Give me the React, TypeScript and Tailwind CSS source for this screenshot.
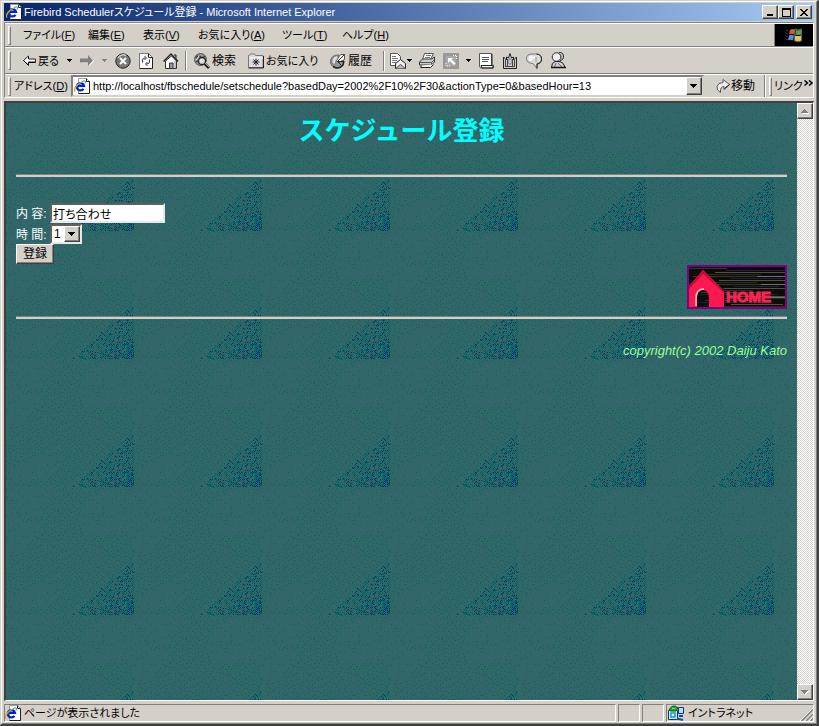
import React from "react";

const raised =
  "border border-t-white border-l-white border-r-[#404040] border-b-[#404040] bg-[#d4d0c8] shadow-[inset_-1px_-1px_0_#808080]";
const sunken = "border border-t-[#808080] border-l-[#808080] border-r-white border-b-white";

/* ---------- dithered wallpaper tile ---------- */

const TILE = 128;

function buildTile() {
  let seed = 20021;
  const rnd = () => {
    seed = (seed * 16807) % 2147483647;
    return seed / 2147483647;
  };
  const paths = { teal: "", blue: "", navy: "", wine: "" };
  const put = (key: keyof typeof paths, x: number, y: number) => {
    paths[key] += `M${x} ${y}h1v1h-1z`;
  };
  const inBlue = (x: number, y: number) =>
    (x < 46 && y < 42 - x * 0.4) ||
    (x < 36 && y > 36 && y < 78 - x) ||
    (x > 4 && x < 54 && y > 110 - x * 0.5 && y < 126 - x * 0.2) ||
    (x > 74 && y > 2 && y < 48 && x + y > 98);
  const shadeDepth = (x: number, y: number) => (x + y * 1.1 - 206) / 58;
  for (let y = 0; y < TILE; y += 4) {
    for (let x = 0; x < TILE; x += 4) {
      const px = x + Math.floor(rnd() * 3);
      const py = y + Math.floor(rnd() * 3);
      if (inBlue(px, py)) {
        put(rnd() < 0.65 ? "blue" : "teal", px, py);
      } else {
        put("teal", px, py);
        if (rnd() < (px + py > 130 ? 0.7 : 0.25)) {
          put("teal", x + ((px + 2) % 4), y + ((py + 2) % 4));
        }
      }
    }
  }
  for (let y = 66; y < TILE; y += 1) {
    for (let x = 58; x < TILE; x += 1) {
      const depth = shadeDepth(x, y);
      if (depth < 0) continue;
      const r = rnd();
      if ((x + y) % 2 === 0) {
        if (r < 0.1 + depth * 0.36) put("navy", x, y);
        else if (r < 0.32 + depth * 0.5) put("teal", x, y);
      } else if (r < 0.04 * depth) {
        put("wine", x, y);
      } else if (r < 0.12 + depth * 0.2) {
        put("teal", x, y);
      }
    }
  }
  return paths;
}

const tile = buildTile();

function Wallpaper() {
  return (
    <svg className="absolute inset-0 h-full w-full" shapeRendering="crispEdges" aria-hidden="true">
      <defs>
        <pattern id="tile" width={TILE} height={TILE} patternUnits="userSpaceOnUse">
          <rect width={TILE} height={TILE} fill="#336666" />
          <path d={tile.teal} fill="#006666" />
          <path d={tile.blue} fill="#336699" />
          <path d={tile.navy} fill="#003366" />
          <path d={tile.wine} fill="#663366" />
        </pattern>
      </defs>
      <rect width="100%" height="100%" fill="url(#tile)" />
    </svg>
  );
}

/* ---------- icons ---------- */

function Icon({ children, w = 16, h = 16 }: { children: React.ReactNode; w?: number; h?: number }) {
  return (
    <svg width={w} height={h} viewBox={`0 0 ${w} ${h}`} className="shrink-0" aria-hidden="true">
      {children}
    </svg>
  );
}

function PageIcon() {
  return (
    <Icon>
      <path d="M4.500.5h8l3 3v12h-11z" fill="#fff" stroke="#a0a0a0" />
      <path d="M12.500.5v3h3v12h-11" fill="none" stroke="#222" />
      <path d="M9.500 10.800a3.700 3.700 0 1 1 .5-3h-6.500" fill="none" stroke="#0020e0" strokeWidth="2.200" />
      <path d="M1 13.500c-2-2 2-8 8-10" fill="none" stroke="#c8b400" strokeWidth="1.300" />
      <path d="M8.500 3.500c3-1.500 3.500 0 2.500 2" fill="none" stroke="#0080c0" />
    </Icon>
  );
}

function Caret({ color = "#000" }: { color?: string }) {
  return (
    <svg width="5" height="3" viewBox="0 0 5 3" className="shrink-0" shapeRendering="crispEdges" aria-hidden="true">
      <path d="M0 0h5v1h-1v1h-1v1h-1v-1h-1v-1h-1z" fill={color} />
    </svg>
  );
}

function BigCaret({ color = "#000", up = false, shade = false }: { color?: string; up?: boolean; shade?: boolean }) {
  const d = up ? "M3 0h1v1h1v1h1v1h1v1h-7v-1h1v-1h1v-1h1z" : "M0 0h7v1h-1v1h-1v1h-1v1h-1v-1h-1v-1h-1v-1h-1z";
  return (
    <svg width="8" height="5" viewBox="0 0 8 5" shapeRendering="crispEdges" aria-hidden="true">
      {shade && <path d={d} fill="#fff" transform="translate(1 1)" />}
      <path d={d} fill={color} />
    </svg>
  );
}

const BackIcon = () => (
  <Icon w={13} h={13}>
    <path d="M5.500 2v3h7v3h-7v3l-5-4.500z" fill="#fff" stroke="#222" />
    <path d="M5.500 8.500h7M5.500 11.500l-5-5" stroke="#000" fill="none" />
  </Icon>
);
const ForwardIcon = () => (
  <Icon w={14} h={13}>
    <path d="M9 3v3h-8v3h8v3l5-5z" fill="#fff" />
    <path d="M8 1v3.500h-8v4h8v3.500l5-5.500z" fill="#808080" />
  </Icon>
);
const StopIcon = () => (
  <Icon>
    <circle cx="8" cy="8" r="7.200" fill="#777" stroke="#222" />
    <path d="M3 5a6 6 0 0 1 8-2.500" stroke="#ccc" fill="none" strokeWidth="1.500" />
    <path d="M5 5l6 6M11 5l-6 6" stroke="#fff" strokeWidth="2" />
  </Icon>
);
const RefreshIcon = () => (
  <Icon w={14}>
    <path d="M.5.5h9l4 4v11h-13z" fill="#fff" stroke="#777" />
    <path d="M9.500.5v4h4v11h-13" fill="none" stroke="#222" />
    <path d="M3.500 9.500v-2.500q0-2 3-2M5.500 3l2 2-2 2M10.500 6.500v2.500q0 2-3 2M8.500 9l-2 2 2 2" fill="none" stroke="#333" />
  </Icon>
);
const HouseIcon = () => (
  <Icon>
    <path d="M11 2h2v4" stroke="#222" fill="#aaa" />
    <path d="M2.500 8v7.500h11v-7.500l-5-5z" fill="#fff" stroke="#333" />
    <path d="M.5 8.500l7.500-7.500 7 7.500" fill="none" stroke="#222" strokeWidth="1.400" />
    <path d="M6.500 15v-5h3.500v5" fill="#999" stroke="#333" />
    <path d="M12 8v7" stroke="#888" />
  </Icon>
);
const SearchIcon = () => (
  <Icon>
    <circle cx="6.500" cy="6.500" r="6" fill="#999" stroke="#555" />
    <path d="M1.500 5q3-4 5-1t4-1M2 9q3-2 4 2" stroke="#444" fill="none" strokeWidth="1.500" />
    <path d="M2 7q3-2 3-5" stroke="#ddd" fill="none" />
    <circle cx="8" cy="8" r="3.500" fill="#ddd" stroke="#222" strokeWidth="1.300" />
    <path d="M6.500 8q0-1.500 1.500-1.500" stroke="#fff" fill="none" />
    <path d="M10.500 10.500l4.500 4.500" stroke="#222" strokeWidth="2.800" />
    <path d="M11 10l4 4" stroke="#aaa" />
  </Icon>
);
const FavIcon = () => (
  <Icon>
    <path d="M.5 14.500v-12h1l1-1.500h4l1 1.500h7.500v12z" fill="#ddd" stroke="#777" />
    <path d="M15.500 3v12h-15" fill="none" stroke="#222" />
    <path d="M1 5h14" stroke="#fff" />
    <path d="M8 5.500v7M4.500 9h7M5.500 6.500l5 5M10.500 6.500l-5 5" stroke="#222" />
  </Icon>
);
const HistoryIcon = () => (
  <Icon>
    <circle cx="7" cy="8.500" r="6.500" fill="#999" stroke="#666" />
    <path d="M2 7q1-4 5-4.500l2 4-3 1-1 4-3-1z" fill="#ddd" stroke="#777" strokeWidth=".8" />
    <path d="M10.500 1.500h4v5l-6 3-2-2z" fill="#fff" stroke="#555" />
    <path d="M7 9l7.500-7.500M7 8.500h7M8 9l3 3" stroke="#222" fill="none" />
    <path d="M3 13.500q6 3.500 10-1.500l1-4" fill="none" stroke="#222" strokeWidth="1.500" />
  </Icon>
);
const MailIcon = () => (
  <Icon>
    <path d="M.5.500h7l3 3v9h-10z" fill="#fff" stroke="#555" />
    <path d="M2 3.500h4M2 5.500h6M2 7.500h5M2 9.500h4" stroke="#777" />
    <path d="M5.500 10.500l5-4 5 4v5h-10z" fill="#eee" stroke="#222" />
    <path d="M5.500 15.500l5-4 5 4" fill="#bbb" stroke="#555" />
  </Icon>
);
const PrintIcon = () => (
  <Icon>
    <path d="M5.500.500h9l-3 6h-8z" fill="#fff" stroke="#555" />
    <path d="M7 2.500h5M6 4.500h5" stroke="#777" />
    <path d="M.5 9l3-3h9l3-2v5l-3 3h-12z" fill="#ccc" stroke="#333" />
    <path d="M.5 9.500h12l3-3M12.500 9.500v3" fill="none" stroke="#555" />
    <path d="M2.500 12.500l-1 2h10l3-3" fill="#fff" stroke="#222" />
  </Icon>
);
const EditIcon = () => (
  <Icon>
    <path d="M0 0h16v16h-16z" fill="#999" />
    <path d="M3 3h10v10h-10z" fill="#aaa" />
    <path d="M5 5h5l-1.500 1.500 4 4-1.500 1.500-4-4-2 2z" fill="#fff" />
    <path d="M3 10v3h4M10 2.500h3.500v4" fill="none" stroke="#fff" strokeDasharray="1 1" />
  </Icon>
);
const NotesIcon = () => (
  <Icon>
    <path d="M1.500.500h12v12h2v2.500h-13l-1-2z" fill="#fff" stroke="#555" />
    <path d="M4 4.500h7M4 6.500h7M4 8.500h6" stroke="#555" />
    <path d="M14 1v11.500h-11l1 2.500h11v-3" fill="none" stroke="#222" />
  </Icon>
);
const CrownIcon = () => (
  <Icon>
    <path d="M1.500 15.500v-11.500l3 3v-3l2 1 1.500-4.500 1.500 4.500 2-1v3l3-3v11.500z" fill="#ccc" stroke="#222" />
    <path d="M3.500 7v7M5.500 6v7M10.500 6v7M12.500 7v7M3 13.500h10" stroke="#444" />
    <path d="M7 6h2v5h-2z" fill="#fff" stroke="#555" strokeWidth=".7" />
  </Icon>
);
const BubbleIcon = () => (
  <Icon>
    <path d="M7 10.500l4 5v-5q4.500-.5 4.500-5t-6-4.500h-3q-6 0-6 4.500t6.500 5z" fill="#ddd" stroke="#777" />
    <path d="M11 15.500v-4.500q4.500-.5 4.500-5t-5-5" fill="none" stroke="#222" />
    <path d="M3 4.500h6M3 7h3" stroke="#fff" strokeWidth="2" />
    <path d="M10 4v5" stroke="#999" />
  </Icon>
);
const PeopleIcon = () => (
  <Icon w={17} h={17}>
    <path d="M10 8.500a4 4 0 1 0-1-8" fill="#bbb" stroke="#333" />
    <circle cx="6.500" cy="5" r="4.300" fill="#eee" stroke="#333" />
    <path d="M1.500 15.500q0-5 3.500-6h5q4 1 5 6z" fill="#ccc" stroke="#222" />
    <path d="M4.500 15l1.500-4M8 11l4 4M11 5.500v2" stroke="#777" />
    <path d="M1 15.500h15" stroke="#111" strokeWidth="1.500" />
  </Icon>
);
const GoIcon = () => (
  <Icon w={14}>
    <path d="M4.500 14.500q-4-2-3.500-6 1-4 6-4v-3l6.500 5-5.500 5v-3q-4 0-3.500 6z" fill="#eee" stroke="#555" />
    <path d="M8.500 10.500l5-4" stroke="#111" />
  </Icon>
);
const NetworkIcon = () => (
  <Icon>
    <path d="M.5 5.500h9v9h-9z" fill="#cde8f8" stroke="#203070" />
    <path d="M3 8h4v4h-4z" fill="#fff" stroke="#00a0d8" strokeWidth="1.500" />
    <path d="M10.500 2.500h5v6h-5z" fill="#b0e0ff" stroke="#203070" />
    <path d="M1 5q4-7 9-2l-2 3h-5z" fill="#18a838" stroke="#105020" />
    <path d="M4 3l3 1" stroke="#c0e040" />
    <path d="M11 11h4M9 13.500l6 1.500" stroke="#1050a0" strokeWidth="2" />
  </Icon>
);
const WindowsLogo = () => (
  <Icon w={18} h={16}>
    <path d="M5 3q3-2 5 0l-1 4.500q-3-1.500-5 0z" fill="#d05848" />
    <path d="M11 3q2 1 5-.5v5q-3 1-5.500 0z" fill="#58a050" />
    <path d="M4 8.500q2-1.500 5 0l-1 5q-2-1.500-5 0z" fill="#5090e0" />
    <path d="M10 8.500q3 1 6 0v5q-3 1-6 0z" fill="#e8c848" />
    <path d="M10 2q3 2 6.500 0v12q-3 1.500-7 0z" fill="none" stroke="#aaa" strokeWidth=".6" />
    <path d="M2 3v10M0 5v7" stroke="#806060" strokeDasharray="1 2" />
  </Icon>
);

function HomeBanner() {
  const streaks = Array.from({ length: 20 }, (_, i) => ({
    y: 3 + i * 2,
    x: (i * 37) % 48,
    w: 38 + ((i * 23) % 50),
    c: ["#36362c", "#20203c", "#505048", "#2c2c18"][i % 4],
  }));
  return (
    <svg width="100" height="44" viewBox="0 0 100 44" role="img" aria-label="HOME">
      <path d="M0 0h100v44h-100z" fill="#800080" />
      <path d="M2 2h96v40h-96z" fill="#0c0c08" />
      <g shapeRendering="crispEdges">
        {streaks.map((s) => (
          <rect key={s.y} x={2 + s.x} y={s.y} width={Math.min(s.w, 96 - s.x)} height="1" fill={s.c} />
        ))}
        <path d="M70 11h28M74 19h24M76 32h22" stroke="#707070" />
      </g>
      <path d="M2 42v-21l14-16 21 21v16h-15v-10q-1-7-6-7t-6 7v10z" fill="#ff1850" />
      <path d="M2 21l14-16 21 21v2l-21-19-14 15z" fill="#c00c38" />
      <path d="M9 41v-8q0-9 8-9" stroke="#ffc0d0" strokeWidth="1.500" fill="none" />
      <text
        x="39"
        y="37"
        fill="#ff2058"
        stroke="#ff2058"
        className="[font-family:'Liberation_Sans',Arial,sans-serif] text-[15px] font-bold"
      >
        HOME
      </text>
    </svg>
  );
}

/* ---------- chrome pieces ---------- */

const Grip = () => (
  <div className="ml-[3px] h-[19px] w-[3px] shrink-0 border border-t-white border-l-white border-r-[#808080] border-b-[#808080]" />
);

const Divider = () => <div className="h-5 w-[2px] shrink-0 border-l border-l-[#808080] bg-white" />;

function ToolButton({ label, icon, text, width }: { label: string; icon: React.ReactNode; text?: string; width: string }) {
  return (
    <button type="button" aria-label={label} className={`flex shrink-0 items-center gap-[2px] whitespace-nowrap ${width}`}>
      {icon}
      {text}
    </button>
  );
}

const menus = [
  { text: "ファイル", key: "F", width: "w-[65px]" },
  { text: "編集", key: "E", width: "w-[55px]" },
  { text: "表示", key: "V", width: "w-[55px]" },
  { text: "お気に入り", key: "A", width: "w-[84px]" },
  { text: "ツール", key: "T", width: "w-[60px]" },
  { text: "ヘルプ", key: "H", width: "w-[60px]" },
];

const row = "flex items-center border-t border-t-white border-b border-b-[#808080]";

export default function App() {
  return (
    <div className="flex h-screen flex-col border-t border-r-2 border-b-2 border-l border-t-[#d4d0c8] border-l-[#d4d0c8] border-r-[#404040] border-b-[#404040] bg-[#d4d0c8] [font-family:'Liberation_Sans','Noto_Sans_CJK_JP',sans-serif] text-[11px] leading-4 text-black [font-feature-settings:'palt']">
      <div className="flex min-h-0 flex-1 flex-col border border-t-white border-l-white border-r-[#808080] border-b-[#808080] pt-px pr-[2px] pl-[2px]">
        <header className="flex h-[18px] shrink-0 items-center bg-linear-to-r from-[#0a246a] to-[#a6caf0] pr-[2px] pl-[2px] text-white">
          <PageIcon />
          <h1 className="ml-[2px] flex-1 truncate">Firebird Schedulerスケジュール登録 - Microsoft Internet Explorer</h1>
          <button type="button" aria-label="最小化" className={`flex h-[14px] w-4 items-end justify-center pb-[2px] ${raised}`}>
            <span className="h-[2px] w-[6px] bg-black" />
          </button>
          <button type="button" aria-label="最大化" className={`flex h-[14px] w-4 items-center justify-center ${raised}`}>
            <span className="h-[9px] w-[9px] border border-t-2 border-black" />
          </button>
          <button type="button" aria-label="閉じる" className={`ml-[2px] flex h-[14px] w-4 items-center justify-center ${raised}`}>
            <svg width="8" height="7" viewBox="0 0 8 7" shapeRendering="crispEdges" aria-hidden="true">
              <path d="M0 0h2v1h1v1h2v-1h1v-1h2v1h-1v1h-1v1h-1v1h1v1h1v1h1v1h-2v-1h-1v-1h-2v1h-1v1h-2v-1h1v-1h1v-1h1v-1h-1v-1h-1v-1h-1z" />
            </svg>
          </button>
        </header>

        <div className="mt-px shrink-0 border border-t-[#808080] border-l-[#808080] border-r-white border-b-white">
          <nav className={`${row} h-6`}>
            <Grip />
            <div className="ml-3 flex flex-1">
              {menus.map((m) => (
                <button key={m.key} type="button" className={`text-left whitespace-nowrap ${m.width}`}>
                  {m.text}(<u>{m.key}</u>)
                </button>
              ))}
            </div>
            <div className="flex h-[22px] w-[39px] items-center justify-center border-l border-l-[#808080] bg-black">
              <WindowsLogo />
            </div>
          </nav>

          <div className={`${row} h-[27px]`}>
            <Grip />
            <div className="ml-3 flex flex-1 items-center">
              <ToolButton label="戻る" icon={<BackIcon />} text="戻る" width="w-[44px]" />
              <span className="w-[13px]"><Caret /></span>
              <ToolButton label="進む" icon={<ForwardIcon />} width="w-[22px]" />
              <span className="w-[13px]"><Caret color="#808080" /></span>
              <ToolButton label="中止" icon={<StopIcon />} width="w-6" />
              <ToolButton label="更新" icon={<RefreshIcon />} width="w-6" />
              <ToolButton label="ホーム" icon={<HouseIcon />} width="w-[22px]" />
              <Divider />
              <span className="w-[7px]" />
              <ToolButton label="検索" icon={<SearchIcon />} text="検索" width="w-[54px] text-[12px]" />
              <ToolButton label="お気に入り" icon={<FavIcon />} text="お気に入り" width="w-[82px]" />
              <ToolButton label="履歴" icon={<HistoryIcon />} text="履歴" width="w-[53px] text-[12px]" />
              <Divider />
              <span className="w-[5px]" />
              <ToolButton label="メール" icon={<MailIcon />} width="w-[17px]" />
              <span className="w-3"><Caret /></span>
              <ToolButton label="印刷" icon={<PrintIcon />} width="w-6" />
              <ToolButton label="編集" icon={<EditIcon />} width="w-[23px]" />
              <span className="w-3"><Caret /></span>
              <ToolButton label="メモ" icon={<NotesIcon />} width="w-6" />
              <ToolButton label="王冠" icon={<CrownIcon />} width="w-6" />
              <ToolButton label="ディスカッション" icon={<BubbleIcon />} width="w-6" />
              <ToolButton label="メッセンジャー" icon={<PeopleIcon />} width="w-6" />
            </div>
          </div>

          <div className="flex h-[23px] items-center border-t border-t-white">
            <Grip />
            <label htmlFor="address" className="ml-[3px] w-[57px] whitespace-nowrap">
              アドレス(<u>D</u>)
            </label>
            <div className="flex h-[22px] flex-1 items-center border-2 border-t-[#808080] border-l-[#808080] border-r-[#d4d0c8] border-b-[#d4d0c8] bg-white pl-px">
              <PageIcon />
              <input
                id="address"
                className="ml-[3px] h-4 min-w-0 flex-1 bg-white outline-none"
                defaultValue="http://localhost/fbschedule/setschedule?basedDay=2002%2F10%2F30&actionType=0&basedHour=13"
              />
              <button type="button" aria-label="履歴を開く" className={`flex h-[18px] w-4 items-center justify-center ${raised}`}>
                <BigCaret />
              </button>
            </div>
            <button type="button" className="ml-3 flex w-12 items-center gap-px text-[12px] whitespace-nowrap">
              <GoIcon />
              移動
            </button>
            <div className="h-[22px] w-[2px] border-l border-l-[#808080] bg-white" />
            <Grip />
            <button type="button" className="ml-[2px] flex w-[39px] items-start whitespace-nowrap">
              <span className="w-[30px] text-left">リンク</span>
              <svg width="9" height="7" viewBox="0 0 9 7" className="mt-[2px]" aria-hidden="true">
                <path d="M.5.5l3 2.500-3 2.500M5 .5l3 2.500-3 2.500" fill="none" stroke="#000" strokeWidth="1.500" />
              </svg>
            </button>
          </div>
        </div>

        <div className="mt-[3px] flex min-h-0 flex-1 border-t-2 border-l-2 border-r border-b border-t-[#404040] border-l-[#404040] border-r-white border-b-white">
          <main className="relative min-w-0 flex-1 overflow-hidden bg-[#336666]">
            <Wallpaper />
            <div className="relative px-[10px] pt-[9px] text-[12px] text-white">
              <h2 className="text-center text-[26px] leading-[38px] font-bold text-[#00ffff] [font-feature-settings:normal]">スケジュール登録</h2>
              <hr className="mt-6 h-[3px] border-t border-t-[#808080] bg-[#d4d0c8]" />
              <form className="mt-[26px]" onSubmit={(e) => e.preventDefault()}>
                <div className="flex h-[21px] items-start">
                  <label htmlFor="content" className="w-[34px] pt-[3px] whitespace-nowrap">内 容:</label>
                  <input
                    id="content"
                    defaultValue="打ち合わせ"
                    className="h-5 w-[115px] border-2 border-t-[#606060] border-l-[#606060] border-r-[#e8e8e8] border-b-[#e8e8e8] bg-white px-px text-black outline-none"
                  />
                </div>
                <div className="flex h-5 items-start">
                  <label htmlFor="hour" className="w-[34px] pt-[3px] whitespace-nowrap">時 間:</label>
                  <div className="flex h-5 w-8 border-2 border-t-[#606060] border-l-[#606060] border-r-[#e8e8e8] border-b-[#e8e8e8] bg-white">
                    <select id="hour" className="w-3 appearance-none bg-white pl-[2px] text-black outline-none">
                      <option>1</option>
                    </select>
                    <span className={`flex flex-1 items-center justify-center ${raised}`}>
                      <BigCaret />
                    </span>
                  </div>
                </div>
                <button type="submit" className={`block h-5 w-[38px] text-center text-black ${raised}`}>登録</button>
              </form>
              <div className="mt-px flex justify-end">
                <a href="#home" className="block"><HomeBanner /></a>
              </div>
              <hr className="mt-[7px] h-[3px] border-t border-t-[#808080] bg-[#d4d0c8]" />
              <p className="mt-6 text-right text-[13px] leading-4 text-[#99ff99] italic">copyright(c) 2002 Daiju Kato</p>
            </div>
          </main>
          <div className="flex w-4 shrink-0 flex-col justify-between bg-[repeating-conic-gradient(#ffffff_0_25%,#d4d0c8_0_50%)] bg-[length:2px_2px]">
            <button type="button" aria-label="上へ" className={`flex h-4 items-center justify-center ${raised}`}>
              <BigCaret color="#808080" up shade />
            </button>
            <button type="button" aria-label="下へ" className={`flex h-4 items-center justify-center ${raised}`}>
              <BigCaret color="#808080" shade />
            </button>
          </div>
        </div>

        <footer className="mt-[3px] mb-px flex h-[18px] shrink-0 gap-[2px]">
          <div className={`flex flex-1 items-center gap-[3px] ${sunken}`}>
            <PageIcon />
            <span>ページが表示されました</span>
          </div>
          <div className={`w-[22px] ${sunken}`} />
          <div className={`w-[22px] ${sunken}`} />
          <div className={`flex w-[148px] items-center pl-px ${sunken}`}>
            <NetworkIcon />
            <span className="ml-1 flex-1">イントラネット</span>
            <svg width="13" height="13" viewBox="0 0 13 13" className="self-end" aria-hidden="true">
              <path d="M0 13l13-13M5 13l8-8M9 13l4-4" stroke="#fff" />
              <path d="M1.500 13l11.500-11.500M6 13l7-7M10.500 13l3-3" stroke="#808080" strokeWidth="1.500" />
            </svg>
          </div>
        </footer>
      </div>
    </div>
  );
}
